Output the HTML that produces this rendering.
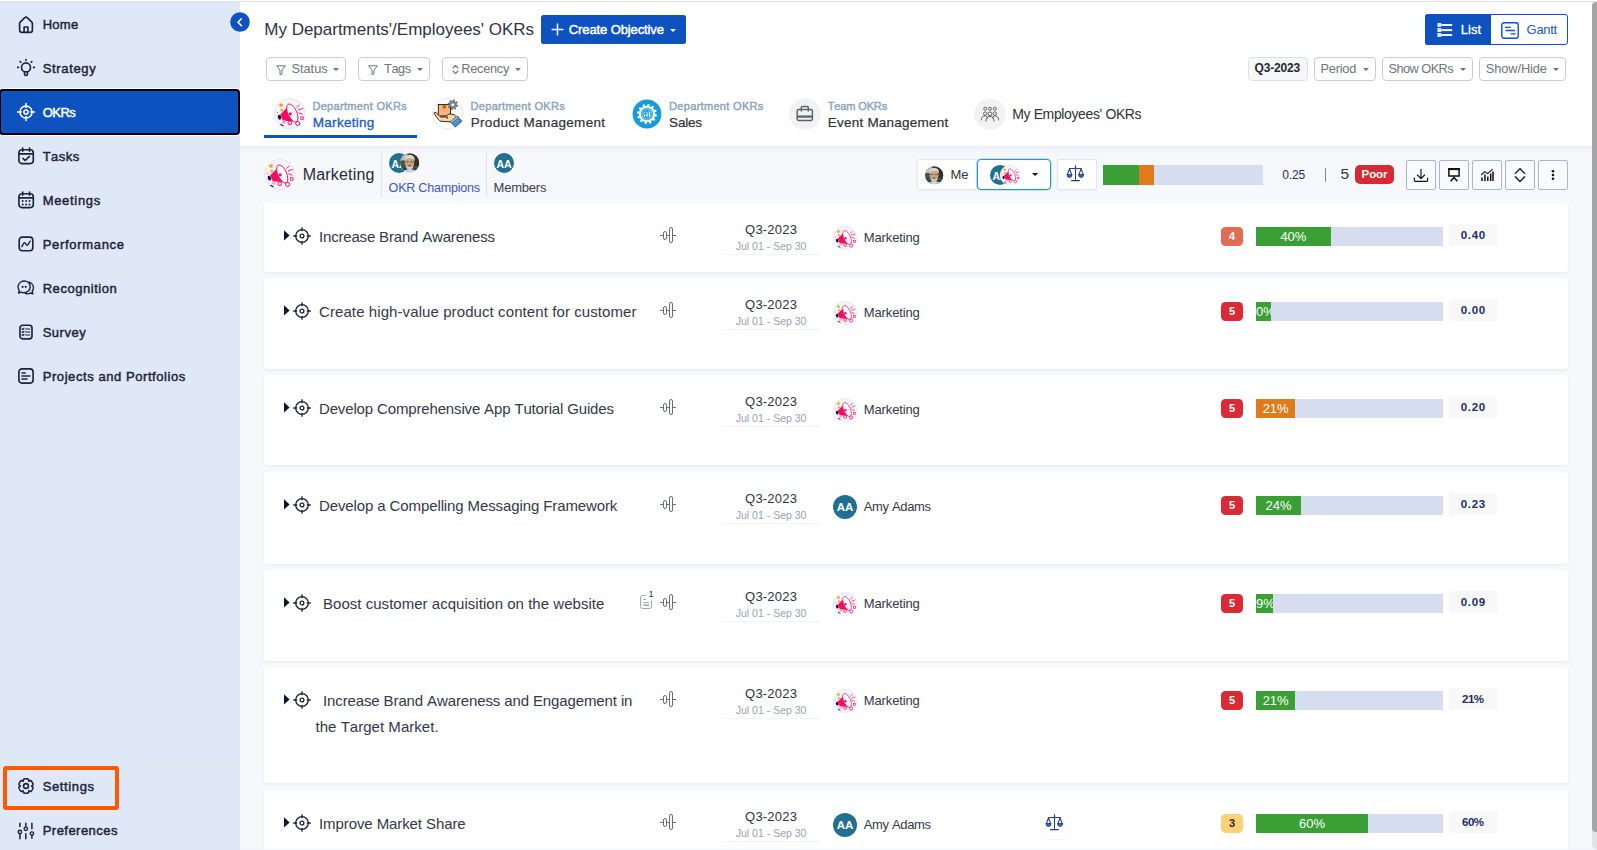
<!DOCTYPE html>
<html lang="en"><head><meta charset="utf-8"><title>My Departments'/Employees' OKRs</title>
<style>
html,body{margin:0;padding:0}
body{width:1597px;height:850px;overflow:hidden;position:relative;background:#f7f8fc;font-family:"Liberation Sans",Arial,sans-serif;font-kerning:none;-webkit-font-smoothing:antialiased}
.t{position:absolute;white-space:nowrap;margin:0}
.b{position:absolute;box-sizing:content-box}
.i{position:absolute;overflow:visible}
</style></head>
<body>
<!-- sidebar -->
<div class="b" style="left:0px;top:0px;width:240px;height:850px;background:#dfe8f7;"></div>
<div class="b" style="left:-1px;top:89px;width:241px;height:46px;background:#0d52bf;border:2px solid #000;border-radius:4px;box-sizing:border-box;box-shadow:0 0 0 1px rgba(255,255,255,.75);"></div>
<div class="b" style="left:0px;top:763px;width:240px;height:1px;background:#e6e6e2;"></div>
<svg class="i" style="left:16px;top:14.5px;" width="20" height="20" viewBox="0 0 20 20"><path fill="none" stroke="#1d2438" stroke-width="1.65" stroke-linecap="round" stroke-linejoin="round" d="M3.6 8.6 Q3.6 7.6 4.4 6.9 L8.8 2.7 Q10 1.5 11.2 2.7 L15.6 6.9 Q16.4 7.6 16.4 8.6 V15 Q16.4 17.4 14 17.4 H6 Q3.6 17.4 3.6 15 Z"/><path fill="none" stroke="#1d2438" stroke-width="1.65" stroke-linecap="round" stroke-linejoin="round" d="M8.1 17.2 V12 H11.9 V17.2"/></svg>
<div class="t" style="left:42.7px;top:15px;font-size:13px;line-height:20px;color:#1d2438;letter-spacing:0.27px;-webkit-text-stroke:0.45px #1d2438;">Home</div>
<svg class="i" style="left:16px;top:58px;" width="20" height="20" viewBox="0 0 20 20"><circle fill="none" stroke="#1d2438" stroke-width="1.65" stroke-linecap="round" stroke-linejoin="round" cx="10" cy="9.4" r="4.5"/><path fill="none" stroke="#1d2438" stroke-width="1.65" stroke-linecap="round" stroke-linejoin="round" d="M8.5 14.8 V16.2 Q8.5 17.4 10 17.4 Q11.5 17.4 11.5 16.2 V14.8"/><path fill="none" stroke="#1d2438" stroke-width="1.65" stroke-linecap="round" stroke-linejoin="round" d="M10 1.6 V2.4 M4.2 3.6 L4.8 4.2 M15.8 3.6 L15.2 4.2 M1.6 9.4 H2.4 M17.6 9.4 H18.4"/></svg>
<div class="t" style="left:42.7px;top:59px;font-size:13px;line-height:20px;color:#1d2438;letter-spacing:0.65px;-webkit-text-stroke:0.45px #1d2438;">Strategy</div>
<svg class="i" style="left:16px;top:102px;" width="20" height="20" viewBox="0 0 20 20"><circle fill="none" stroke="#fff" stroke-width="1.5" stroke-linecap="round" stroke-linejoin="round" cx="10" cy="10" r="6.1"/><circle fill="none" stroke="#fff" stroke-width="1.5" stroke-linecap="round" stroke-linejoin="round" cx="10" cy="10" r="2.1"/><path fill="none" stroke="#fff" stroke-width="1.5" stroke-linecap="round" stroke-linejoin="round" d="M14.60 10.00 L18.50 10.00 M5.40 10.00 L1.50 10.00 M10.00 14.60 L10.00 18.50 M10.00 5.40 L10.00 1.50 "/></svg>
<div class="t" style="left:42.7px;top:103px;font-size:13px;line-height:20px;color:#fff;letter-spacing:-0.52px;-webkit-text-stroke:0.45px #fff;">OKRs</div>
<svg class="i" style="left:16px;top:146px;" width="20" height="20" viewBox="0 0 20 20"><rect fill="none" stroke="#1d2438" stroke-width="1.65" stroke-linecap="round" stroke-linejoin="round" x="2.9" y="3.7" width="14.4" height="13.9" rx="3"/><path fill="none" stroke="#1d2438" stroke-width="1.65" stroke-linecap="round" stroke-linejoin="round" d="M6.7 2.1 V5.2 M13.5 2.1 V5.2 M3.2 7.8 H17"/><path fill="none" stroke="#1d2438" stroke-width="1.65" stroke-linecap="round" stroke-linejoin="round" d="M7 12.4 L9.2 14.5 L13.4 10.4"/></svg>
<div class="t" style="left:42.7px;top:147px;font-size:13px;line-height:20px;color:#1d2438;letter-spacing:0.46px;-webkit-text-stroke:0.45px #1d2438;">Tasks</div>
<svg class="i" style="left:16px;top:190px;" width="20" height="20" viewBox="0 0 20 20"><rect fill="none" stroke="#1d2438" stroke-width="1.65" stroke-linecap="round" stroke-linejoin="round" x="2.9" y="3.7" width="14.4" height="13.9" rx="3"/><path fill="none" stroke="#1d2438" stroke-width="1.65" stroke-linecap="round" stroke-linejoin="round" d="M6.7 2.1 V5.2 M13.5 2.1 V5.2 M3.2 7.8 H17"/><circle cx="6.7" cy="11.1" r="1" fill="#1d2438"/><circle cx="10.1" cy="11.1" r="1" fill="#1d2438"/><circle cx="13.5" cy="11.1" r="1" fill="#1d2438"/><circle cx="6.7" cy="14.4" r="1" fill="#1d2438"/><circle cx="10.1" cy="14.4" r="1" fill="#1d2438"/><circle cx="13.5" cy="14.4" r="1" fill="#1d2438"/></svg>
<div class="t" style="left:42.7px;top:191px;font-size:13px;line-height:20px;color:#1d2438;letter-spacing:0.68px;-webkit-text-stroke:0.45px #1d2438;">Meetings</div>
<svg class="i" style="left:16px;top:234px;" width="20" height="20" viewBox="0 0 20 20"><rect fill="none" stroke="#1d2438" stroke-width="1.65" stroke-linecap="round" stroke-linejoin="round" x="3.2" y="3.1" width="13.6" height="13.6" rx="3"/><path fill="none" stroke="#1d2438" stroke-width="1.4" stroke-linecap="round" stroke-linejoin="round" d="M5.8 12.6 L7.8 9.2 Q8.5 8.1 9.3 9.2 L10.4 10.8 Q11.2 11.9 12 10.7 L14.2 7"/></svg>
<div class="t" style="left:42.7px;top:235px;font-size:13px;line-height:20px;color:#1d2438;letter-spacing:0.69px;-webkit-text-stroke:0.45px #1d2438;">Performance</div>
<svg class="i" style="left:16px;top:278px;" width="20" height="20" viewBox="0 0 20 20"><g transform="translate(0,-0.6)"><path fill="none" stroke="#1d2438" stroke-width="1.45" stroke-linecap="round" stroke-linejoin="round" d="M2.6 15.6 L3.2 13.1 C1.2 10.4 1.8 6.6 4.8 4.6 C7.8 2.7 11.8 3.6 13.5 6.5 C15.2 9.6 13.9 13.4 10.6 14.8 C8.6 15.6 6.6 15.4 5.2 14.7 Z"/><path fill="none" stroke="#1d2438" stroke-width="1.45" stroke-linecap="round" stroke-linejoin="round" d="M13.2 4.9 C16 5.6 17.8 8.2 17.4 11 C17.2 12.2 16.8 13 16.2 13.8 L16.9 16.4 L14.4 15.6 C13 16.5 11.2 16.7 9.6 16.1"/><circle cx="6.6" cy="9.4" r="1.1" fill="#1d2438"/><circle cx="9.7" cy="9.4" r="1.1" fill="#1d2438"/></g></svg>
<div class="t" style="left:42.7px;top:279px;font-size:13px;line-height:20px;color:#1d2438;letter-spacing:0.54px;-webkit-text-stroke:0.45px #1d2438;">Recognition</div>
<svg class="i" style="left:16px;top:322px;" width="20" height="20" viewBox="0 0 20 20"><rect fill="none" stroke="#1d2438" stroke-width="1.65" stroke-linecap="round" stroke-linejoin="round" x="4" y="3.2" width="12" height="13.6" rx="2.6"/><path fill="none" stroke="#1d2438" stroke-width="1.2" stroke-linecap="round" stroke-linejoin="round" d="M6.1 7.0 l0.7 0.7 l1.1 -1.4 M9.6 7.0 H13.8 M6.1 10.0 l0.7 0.7 l1.1 -1.4 M9.6 10.0 H13.8 M6.1 13.0 l0.7 0.7 l1.1 -1.4 M9.6 13.0 H13.8 "/></svg>
<div class="t" style="left:42.7px;top:323px;font-size:13px;line-height:20px;color:#1d2438;letter-spacing:0.51px;-webkit-text-stroke:0.45px #1d2438;">Survey</div>
<svg class="i" style="left:16px;top:366px;" width="20" height="20" viewBox="0 0 20 20"><rect fill="none" stroke="#1d2438" stroke-width="1.65" stroke-linecap="round" stroke-linejoin="round" x="2.9" y="2.9" width="14.2" height="14.2" rx="3"/><path fill="none" stroke="#1d2438" stroke-width="1.65" stroke-linecap="round" stroke-linejoin="round" d="M6 7 H9.2 M6 10 H13.8 M6 13 H11"/></svg>
<div class="t" style="left:42.7px;top:367px;font-size:13px;line-height:20px;color:#1d2438;letter-spacing:0.57px;-webkit-text-stroke:0.45px #1d2438;">Projects and Portfolios</div>
<svg class="i" style="left:16px;top:776px;" width="20" height="20" viewBox="0 0 20 20"><path fill="none" stroke="#1d2438" stroke-width="1.6" stroke-linecap="round" stroke-linejoin="round" d="M15.50 10.00 L16.13 10.32 L16.53 10.69 L16.83 11.08 L17.07 11.50 L17.00 11.88 L16.90 12.24 L16.77 12.60 L16.62 12.95 L16.46 13.29 L16.28 13.62 L16.08 13.95 L15.87 14.26 L15.63 14.56 L15.39 14.85 L15.13 15.13 L14.83 15.37 L14.35 15.38 L13.86 15.31 L13.34 15.15 L12.75 14.76 L12.79 15.47 L12.67 16.00 L12.48 16.46 L12.23 16.87 L11.88 17.00 L11.51 17.09 L11.13 17.16 L10.76 17.21 L10.38 17.24 L10.00 17.25 L9.62 17.24 L9.24 17.21 L8.87 17.16 L8.49 17.09 L8.12 17.00 L7.77 16.87 L7.52 16.46 L7.33 16.00 L7.21 15.47 L7.25 14.76 L6.66 15.15 L6.14 15.31 L5.65 15.38 L5.17 15.37 L4.87 15.13 L4.61 14.85 L4.37 14.56 L4.13 14.26 L3.92 13.95 L3.72 13.62 L3.54 13.29 L3.38 12.95 L3.23 12.60 L3.10 12.24 L3.00 11.88 L2.93 11.50 L3.17 11.08 L3.47 10.69 L3.87 10.32 L4.50 10.00 L3.87 9.68 L3.47 9.31 L3.17 8.92 L2.93 8.50 L3.00 8.12 L3.10 7.76 L3.23 7.40 L3.38 7.05 L3.54 6.71 L3.72 6.38 L3.92 6.05 L4.13 5.74 L4.37 5.44 L4.61 5.15 L4.87 4.87 L5.17 4.63 L5.65 4.62 L6.14 4.69 L6.66 4.85 L7.25 5.24 L7.21 4.53 L7.33 4.00 L7.52 3.54 L7.77 3.13 L8.12 3.00 L8.49 2.91 L8.87 2.84 L9.24 2.79 L9.62 2.76 L10.00 2.75 L10.38 2.76 L10.76 2.79 L11.13 2.84 L11.51 2.91 L11.88 3.00 L12.23 3.13 L12.48 3.54 L12.67 4.00 L12.79 4.53 L12.75 5.24 L13.34 4.85 L13.86 4.69 L14.35 4.62 L14.83 4.63 L15.13 4.87 L15.39 5.15 L15.63 5.44 L15.87 5.74 L16.08 6.05 L16.28 6.38 L16.46 6.71 L16.62 7.05 L16.77 7.40 L16.90 7.76 L17.00 8.12 L17.07 8.50 L16.83 8.92 L16.53 9.31 L16.13 9.68 Z"/><circle fill="none" stroke="#1d2438" stroke-width="1.6" stroke-linecap="round" stroke-linejoin="round" cx="10" cy="10" r="2.4"/></svg>
<div class="t" style="left:42.7px;top:777px;font-size:13px;line-height:20px;color:#1d2438;letter-spacing:0.62px;-webkit-text-stroke:0.45px #1d2438;">Settings</div>
<svg class="i" style="left:16px;top:820.5px;" width="20" height="20" viewBox="0 0 20 20"><path fill="none" stroke="#1d2438" stroke-width="1.5" stroke-linecap="round" stroke-linejoin="round" d="M3.9 2.2 V5.6 M3.9 13.0 V17.8 M9.8 2.2 V5.6 M9.8 12.8 V17.8 M15.9 2.2 V7.8 M15.9 14.6 V17.2 "/><circle fill="none" stroke="#1d2438" stroke-width="1.4" stroke-linecap="round" stroke-linejoin="round" cx="3.9" cy="11" r="1.7"/><circle fill="none" stroke="#1d2438" stroke-width="1.4" stroke-linecap="round" stroke-linejoin="round" cx="9.8" cy="7.8" r="1.7"/><circle fill="none" stroke="#1d2438" stroke-width="1.4" stroke-linecap="round" stroke-linejoin="round" cx="15.9" cy="12.6" r="1.7"/></svg>
<div class="t" style="left:42.7px;top:821px;font-size:13px;line-height:20px;color:#1d2438;letter-spacing:0.47px;-webkit-text-stroke:0.45px #1d2438;">Preferences</div>
<div class="b" style="left:3px;top:766px;width:116px;height:44px;border:4px solid #ff5a00;border-radius:3px;box-sizing:border-box;"></div>
<svg class="i" style="left:230.2px;top:11.9px;z-index:5;" width="20" height="20" viewBox="0 0 20 20"><circle cx="10" cy="10" r="9.8" fill="#0d52bf"/><path d="M11.4 6.8 L8 10.2 L11.4 13.6" fill="none" stroke="#fff" stroke-width="1.6" stroke-linecap="round" stroke-linejoin="round"/></svg>
<!-- header -->
<div class="b" style="left:240px;top:0px;width:1357px;height:146px;background:#fff;"></div>
<div class="b" style="left:240px;top:146px;width:1357px;height:10px;background:linear-gradient(#edeff5,#f4f5fa 45%,#f7f8fc);"></div>
<div class="t" style="left:264.3px;top:18px;font-size:17px;line-height:24px;color:#2e3446;letter-spacing:-0.01px;">My Departments'/Employees' OKRs</div>
<div class="b" style="left:541px;top:15px;width:145px;height:29px;background:#0d52bf;border-radius:2.5px;"></div>
<svg class="i" style="left:550.5px;top:23.3px;" width="13" height="13" viewBox="0 0 13 13"><path d="M6.5 0.6 V12.4 M0.6 6.5 H12.4" stroke="#fff" stroke-width="1.5" fill="none"/></svg>
<div class="t" style="left:568.8px;top:21px;font-size:13px;line-height:18px;color:#fff;letter-spacing:-0.11px;-webkit-text-stroke:0.45px #fff;">Create Objective</div>
<svg class="i" style="left:670px;top:28.5px;" width="6" height="3" viewBox="0 0 6 3"><path d="M0 0 H6 L3.0 3 Z" fill="#fff"/></svg>
<div class="b" style="left:266px;top:57px;width:80px;height:24px;background:#fff;border:1px solid #c8cbd0;border-radius:4px;box-sizing:border-box;"></div>
<div class="b" style="left:358px;top:57px;width:72px;height:24px;background:#fff;border:1px solid #c8cbd0;border-radius:4px;box-sizing:border-box;"></div>
<div class="b" style="left:442px;top:57px;width:86px;height:24px;background:#fff;border:1px solid #c8cbd0;border-radius:4px;box-sizing:border-box;"></div>
<svg class="i" style="left:274.7px;top:63.8px;" width="12" height="12" viewBox="0 0 12 12"><path d="M1.7 1.8 H10.3 L7 6.2 V9.9 L5 10.7 V6.2 Z" fill="none" stroke="#6c757d" stroke-width="1" stroke-linejoin="round"/></svg>
<div class="t" style="left:291.4px;top:60px;font-size:12.8px;line-height:18px;color:#6c757d;">Status</div>
<svg class="i" style="left:333.2px;top:68px;" width="6" height="3" viewBox="0 0 6 3"><path d="M0 0 H6 L3.0 3 Z" fill="#6c757d"/></svg>
<svg class="i" style="left:367.2px;top:63.8px;" width="12" height="12" viewBox="0 0 12 12"><path d="M1.7 1.8 H10.3 L7 6.2 V9.9 L5 10.7 V6.2 Z" fill="none" stroke="#6c757d" stroke-width="1" stroke-linejoin="round"/></svg>
<div class="t" style="left:384px;top:60px;font-size:12.8px;line-height:18px;color:#6c757d;letter-spacing:-0.42px;">Tags</div>
<svg class="i" style="left:417.2px;top:68px;" width="6" height="3" viewBox="0 0 6 3"><path d="M0 0 H6 L3.0 3 Z" fill="#6c757d"/></svg>
<svg class="i" style="left:451.6px;top:63.6px;" width="7" height="11" viewBox="0 0 7 11"><path d="M1 4 L3.5 1.4 L6 4 M1 7 L3.5 9.6 L6 7" fill="none" stroke="#6c757d" stroke-width="1.1" stroke-linejoin="round" stroke-linecap="round"/></svg>
<div class="t" style="left:461.3px;top:60px;font-size:12.8px;line-height:18px;color:#6c757d;letter-spacing:-0.3px;">Recency</div>
<svg class="i" style="left:515.2px;top:68px;" width="6" height="3" viewBox="0 0 6 3"><path d="M0 0 H6 L3.0 3 Z" fill="#6c757d"/></svg>
<div class="b" style="left:1425px;top:14px;width:143px;height:31px;background:#fff;border:1px solid #0d52bf;border-radius:3px;box-sizing:border-box;"></div>
<div class="b" style="left:1425px;top:14px;width:65.5px;height:31px;background:#0d52bf;border-radius:3px;border-top-right-radius:0;border-bottom-right-radius:0;"></div>
<svg class="i" style="left:1436.6px;top:22px;" width="16" height="16" viewBox="0 0 16 16"><rect x="0.4" y="1" width="3.9" height="3.9" fill="#fff" opacity=".88"/><path d="M4.3 3 H15.2" stroke="#fff" stroke-width="2" opacity=".95"/><rect x="0.4" y="6.1" width="3.9" height="3.9" fill="#fff" opacity=".88"/><path d="M4.3 8.1 H15.2" stroke="#fff" stroke-width="2" opacity=".95"/><rect x="0.4" y="11" width="3.9" height="3.9" fill="#fff" opacity=".88"/><path d="M4.3 13 H15.2" stroke="#fff" stroke-width="2" opacity=".95"/></svg>
<div class="t" style="left:1460.8px;top:20px;font-size:13px;line-height:20px;color:#fff;letter-spacing:-0.01px;-webkit-text-stroke:0.3px #fff;">List</div>
<svg class="i" style="left:1501px;top:21.5px;" width="18" height="17" viewBox="0 0 18 17"><rect x="0.8" y="0.8" width="16.4" height="15.4" rx="2.2" fill="none" stroke="#0d52bf" stroke-width="1.4"/><path d="M4 5.3 H9.6 M4.6 8.5 H14 M9.6 11.9 H14.6" stroke="#0d52bf" stroke-width="1.3" fill="none"/></svg>
<div class="t" style="left:1526.6px;top:20px;font-size:13px;line-height:20px;color:#1a5ac8;letter-spacing:-0.3px;">Gantt</div>
<div class="b" style="left:1247.5px;top:57px;width:60px;height:23.5px;background:#f6f7f9;border:1px solid #dcdfe4;border-radius:4px;box-sizing:border-box;"></div>
<div class="t" style="left:1254.6px;top:59px;font-size:12px;line-height:18px;color:#23272f;font-weight:700;letter-spacing:-0.18px;">Q3-2023</div>
<div class="b" style="left:1314px;top:57px;width:62px;height:23.5px;background:#fff;border:1px solid #c8cbd0;border-radius:4px;box-sizing:border-box;"></div>
<div class="b" style="left:1382px;top:57px;width:91px;height:23.5px;background:#fff;border:1px solid #c8cbd0;border-radius:4px;box-sizing:border-box;"></div>
<div class="b" style="left:1479px;top:57px;width:87px;height:23.5px;background:#fff;border:1px solid #c8cbd0;border-radius:4px;box-sizing:border-box;"></div>
<div class="t" style="left:1320.5px;top:60px;font-size:12.8px;line-height:18px;color:#6c757d;letter-spacing:-0.24px;">Period</div>
<svg class="i" style="left:1363px;top:68px;" width="6" height="3" viewBox="0 0 6 3"><path d="M0 0 H6 L3.0 3 Z" fill="#6c757d"/></svg>
<div class="t" style="left:1388.6px;top:60px;font-size:12.8px;line-height:18px;color:#6c757d;letter-spacing:-0.58px;">Show OKRs</div>
<svg class="i" style="left:1460px;top:68px;" width="6" height="3" viewBox="0 0 6 3"><path d="M0 0 H6 L3.0 3 Z" fill="#6c757d"/></svg>
<div class="t" style="left:1485.8px;top:60px;font-size:12.8px;line-height:18px;color:#6c757d;letter-spacing:-0.09px;">Show/Hide</div>
<svg class="i" style="left:1553px;top:68px;" width="6" height="3" viewBox="0 0 6 3"><path d="M0 0 H6 L3.0 3 Z" fill="#6c757d"/></svg>
<!-- tabs -->
<svg class="i" style="left:274.3px;top:98.3px;" width="31.4" height="31.4" viewBox="0 0 32 32"><circle cx="16" cy="16" r="15.6" fill="#f5f5f7" stroke="#dfe2e9" stroke-width="0.8"/><path d="M7.2 4.6 l0.8 1.6 1.8 0.2 -1.3 1.2 0.4 1.8 -1.7 -0.9 -1.6 0.9 0.3 -1.8 -1.3 -1.2 1.8 -0.2z" fill="#f59a23"/><path d="M7.9 10.4 l0.6 1.1 1.3 0.2 -0.9 0.9 0.2 1.3 -1.2 -0.6 -1.2 0.6 0.2 -1.3 -0.9 -0.9 1.3 -0.2z" fill="#f59a23"/><circle cx="3.4" cy="14.8" r="0.8" fill="#f59a23"/><ellipse cx="5.6" cy="19.6" rx="1.7" ry="2.5" fill="#0b0b5e" transform="rotate(-20 5.6 19.6)"/><path d="M6.2 17 L13.6 9.4 L20.6 23.6 L9.2 23.2 Z" fill="#ff0a60"/><ellipse cx="18.7" cy="15.3" rx="4.5" ry="9.9" transform="rotate(-24 18.7 15.3)" fill="#fff" stroke="#ff0a60" stroke-width="0.9"/><circle cx="16.6" cy="16.2" r="1.6" fill="#ff0a60"/><rect x="8.3" y="22.6" width="3.4" height="3.6" rx="0.8" fill="#f7a6b5"/><path d="M7 27 L9.4 28.4" stroke="#0b0b5e" stroke-width="1.1" stroke-linecap="round"/><path d="M23.3 9.6 L25.8 7.2 M24.9 12.2 L29.3 10.7 M25.3 15.2 L28.8 16.5" stroke="#ff0a60" stroke-width="0.9" stroke-linecap="round" fill="none"/><rect x="27.3" y="19.2" width="2.5" height="2.5" fill="none" stroke="#ff0a60" stroke-width="0.8"/><circle cx="16.2" cy="25.4" r="1.9" fill="none" stroke="#ff0a60" stroke-width="1"/><circle cx="24.2" cy="26" r="2.1" fill="none" stroke="#ff0a60" stroke-width="1"/></svg>
<div class="t" style="left:312.4px;top:98px;font-size:11px;line-height:16px;color:#8aa1be;letter-spacing:0.32px;-webkit-text-stroke:0.4px #8aa1be;">Department OKRs</div>
<div class="t" style="left:312.8px;top:113px;font-size:13.5px;line-height:20px;color:#1a59c6;letter-spacing:0.28px;-webkit-text-stroke:0.3px #1a59c6;">Marketing</div>
<div class="b" style="left:264px;top:135px;width:153px;height:3px;background:#0d52bf;"></div>
<svg class="i" style="left:432.1px;top:98.3px;" width="31.4" height="31.4" viewBox="0 0 32 32"><circle cx="16" cy="16" r="15.6" fill="#fff" stroke="#dfe3ea" stroke-width="0.8"/><rect x="6.4" y="6.6" width="12.4" height="12" fill="#f8b37c" stroke="#1a1208" stroke-width="0.9"/><rect x="10.9" y="7" width="3.4" height="3.6" fill="#b5651d"/><path d="M24.80 6.90 L26.18 7.37 L25.85 8.74 L24.41 8.53 L23.75 9.45 L24.39 10.75 L23.19 11.49 L22.31 10.32 L21.20 10.50 L20.73 11.88 L19.36 11.55 L19.57 10.11 L18.65 9.45 L17.35 10.09 L16.61 8.89 L17.78 8.01 L17.60 6.90 L16.22 6.43 L16.55 5.06 L17.99 5.27 L18.65 4.35 L18.01 3.05 L19.21 2.31 L20.09 3.48 L21.20 3.30 L21.67 1.92 L23.04 2.25 L22.83 3.69 L23.75 4.35 L25.05 3.71 L25.79 4.91 L24.62 5.79 Z" fill="#7d8a9b" stroke="#2b2f36" stroke-width="0.5"/><circle cx="21.2" cy="6.9" r="1.4" fill="#fff"/><path d="M1.8 15.2 Q2.6 13.8 4.2 15 L8 18.6 L15 18.2 Q16.4 16.2 19 16.4 L22.4 16.8 L26.2 20.4 L21.4 24.4 L9.6 23.8 Q7.6 23.4 6 21.4 Z" fill="#ffd5a6" stroke="#1a1208" stroke-width="0.9" stroke-linejoin="round"/><path d="M8.6 19.4 H15.6 Q16.4 20.3 15.6 21.2" fill="none" stroke="#1a1208" stroke-width="0.9"/><g transform="rotate(-42 24.6 24)"><rect x="20.2" y="20.4" width="9" height="7.2" fill="#4a90dc" stroke="#1c2f4a" stroke-width="0.7"/><rect x="20.2" y="20.4" width="9" height="1.8" fill="#b5d3ea" stroke="#1c2f4a" stroke-width="0.4"/><circle cx="26.4" cy="24.2" r="0.6" fill="#d9a520"/></g></svg>
<div class="t" style="left:470.6px;top:98px;font-size:11px;line-height:16px;color:#8aa1be;letter-spacing:0.3px;-webkit-text-stroke:0.4px #8aa1be;">Department OKRs</div>
<div class="t" style="left:470.7px;top:113px;font-size:13.5px;line-height:20px;color:#2f3238;letter-spacing:0.31px;-webkit-text-stroke:0.2px #2f3238;">Product Management</div>
<svg class="i" style="left:632.2px;top:99px;" width="30" height="30" viewBox="0 0 32 32"><circle cx="16" cy="16" r="15.4" fill="#189bd9"/><path d="M24.70 16.00 L26.68 16.67 L26.36 18.66 L24.27 18.69 L23.53 20.35 L24.91 21.92 L23.64 23.49 L21.82 22.47 L20.35 23.53 L20.76 25.58 L18.88 26.31 L17.81 24.51 L16.00 24.70 L15.33 26.68 L13.34 26.36 L13.31 24.27 L11.65 23.53 L10.08 24.91 L8.51 23.64 L9.53 21.82 L8.47 20.35 L6.42 20.76 L5.69 18.88 L7.49 17.81 L7.30 16.00 L5.32 15.33 L5.64 13.34 L7.73 13.31 L8.47 11.65 L7.09 10.08 L8.36 8.51 L10.18 9.53 L11.65 8.47 L11.24 6.42 L13.12 5.69 L14.19 7.49 L16.00 7.30 L16.67 5.32 L18.66 5.64 L18.69 7.73 L20.35 8.47 L21.92 7.09 L23.49 8.36 L22.47 10.18 L23.53 11.65 L25.58 11.24 L26.31 13.12 L24.51 14.19 Z" fill="#fff"/><circle cx="16" cy="16" r="6.6" fill="#189bd9"/><circle cx="16" cy="16" r="5.4" fill="none" stroke="#fff" stroke-width="0.6"/><path d="M12.6 18.8 V16.6 h1.4 V18.8z M15.3 18.8 V15.4 h1.4 V18.8z M18 18.8 V14.2 h1.4 V18.8z" fill="#fff"/><path d="M11.8 15.6 L14.8 13.6 L16.4 14.6 L19.8 12" fill="none" stroke="#fff" stroke-width="0.6"/></svg>
<div class="t" style="left:669.1px;top:98px;font-size:11px;line-height:16px;color:#8aa1be;letter-spacing:0.31px;-webkit-text-stroke:0.4px #8aa1be;">Department OKRs</div>
<div class="t" style="left:669.1px;top:113px;font-size:13.5px;line-height:20px;color:#2f3238;letter-spacing:-0.2px;-webkit-text-stroke:0.2px #2f3238;">Sales</div>
<svg class="i" style="left:789px;top:98px;" width="32" height="32" viewBox="0 0 32 32"><circle cx="16" cy="16" r="15.8" fill="#f2f2f3"/><rect x="8.2" y="11.5" width="15.2" height="11" rx="1.4" fill="none" stroke="#5f6368" stroke-width="1.5"/><path d="M12.3 13.6 V9.4 Q12.3 8.4 13.3 8.4 H18.3 Q19.3 8.4 19.3 9.4 V13.6" fill="none" stroke="#5f6368" stroke-width="1.5"/><path d="M8.4 18.6 H23.2" fill="none" stroke="#5f6368" stroke-width="2.3"/></svg>
<div class="t" style="left:827.7px;top:98px;font-size:11px;line-height:16px;color:#8aa1be;letter-spacing:-0.13px;-webkit-text-stroke:0.4px #8aa1be;">Team OKRs</div>
<div class="t" style="left:827.8px;top:113px;font-size:13.5px;line-height:20px;color:#2f3238;letter-spacing:0.22px;-webkit-text-stroke:0.2px #2f3238;">Event Management</div>
<svg class="i" style="left:974px;top:98px;" width="32" height="32" viewBox="0 0 32 32"><circle cx="16" cy="16" r="15.8" fill="#f2f2f3"/><g fill="none" stroke="#4d5156" stroke-width="0.9"><circle cx="11.2" cy="10.7" r="1.5"/><circle cx="16" cy="10.7" r="1.5"/><circle cx="20.8" cy="10.7" r="1.5"/><circle cx="11.2" cy="15.6" r="1.7"/><path d="M7.2 22.4 Q7.6 17.8 11.2 17.8 Q13.2 17.8 13.8 20.6"/><circle cx="20.8" cy="15.6" r="1.7"/><path d="M24.8 22.4 Q24.4 17.8 20.8 17.8 Q18.8 17.8 18.2 20.6"/><circle cx="16" cy="15.8" r="1.9"/><path d="M11.9 23.4 Q12.2 18.4 16 18.4 Q19.8 18.4 20.1 23.4"/></g></svg>
<div class="t" style="left:1012.2px;top:104px;font-size:14px;line-height:20px;color:#2f3238;letter-spacing:-0.37px;">My Employees' OKRs</div>
<!-- department header -->
<svg class="i" style="left:264.4px;top:159.1px;" width="31.2" height="31.2" viewBox="0 0 32 32"><circle cx="16" cy="16" r="15.6" fill="#f5f5f7" stroke="#dfe2e9" stroke-width="0.8"/><path d="M7.2 4.6 l0.8 1.6 1.8 0.2 -1.3 1.2 0.4 1.8 -1.7 -0.9 -1.6 0.9 0.3 -1.8 -1.3 -1.2 1.8 -0.2z" fill="#f59a23"/><path d="M7.9 10.4 l0.6 1.1 1.3 0.2 -0.9 0.9 0.2 1.3 -1.2 -0.6 -1.2 0.6 0.2 -1.3 -0.9 -0.9 1.3 -0.2z" fill="#f59a23"/><circle cx="3.4" cy="14.8" r="0.8" fill="#f59a23"/><ellipse cx="5.6" cy="19.6" rx="1.7" ry="2.5" fill="#0b0b5e" transform="rotate(-20 5.6 19.6)"/><path d="M6.2 17 L13.6 9.4 L20.6 23.6 L9.2 23.2 Z" fill="#ff0a60"/><ellipse cx="18.7" cy="15.3" rx="4.5" ry="9.9" transform="rotate(-24 18.7 15.3)" fill="#fff" stroke="#ff0a60" stroke-width="0.9"/><circle cx="16.6" cy="16.2" r="1.6" fill="#ff0a60"/><rect x="8.3" y="22.6" width="3.4" height="3.6" rx="0.8" fill="#f7a6b5"/><path d="M7 27 L9.4 28.4" stroke="#0b0b5e" stroke-width="1.1" stroke-linecap="round"/><path d="M23.3 9.6 L25.8 7.2 M24.9 12.2 L29.3 10.7 M25.3 15.2 L28.8 16.5" stroke="#ff0a60" stroke-width="0.9" stroke-linecap="round" fill="none"/><rect x="27.3" y="19.2" width="2.5" height="2.5" fill="none" stroke="#ff0a60" stroke-width="0.8"/><circle cx="16.2" cy="25.4" r="1.9" fill="none" stroke="#ff0a60" stroke-width="1"/><circle cx="24.2" cy="26" r="2.1" fill="none" stroke="#ff0a60" stroke-width="1"/></svg>
<div class="t" style="left:302.8px;top:164px;font-size:16px;line-height:22px;color:#262b3a;letter-spacing:0.17px;">Marketing</div>
<div class="b" style="left:381px;top:152px;width:1px;height:45px;background:#dfe2ea;"></div>
<div class="b" style="left:389px;top:153px;width:20px;height:20px;border-radius:50%;background:#236f92;color:#fff;font-weight:700;font-size:10.5px;line-height:22.4px;text-align:center;">AA</div>
<svg class="i" style="left:400.2px;top:153.2px;" width="19.6" height="19.6" viewBox="0 0 32 32"><defs><clipPath id="pc1"><circle cx="16" cy="16" r="15.6"/></clipPath></defs><circle cx="16" cy="16" r="16" fill="#fff"/><g clip-path="url(#pc1)"><rect width="32" height="32" fill="#3b2d25"/><rect x="0" y="0" width="12" height="14" fill="#bcbcbc"/><rect x="0" y="12" width="10" height="10" fill="#3f5c3c"/><rect x="0" y="21" width="32" height="4.5" fill="#1f5f58"/><path d="M4 32 Q8 25.5 16 26.5 Q24 25.5 30 32 Z" fill="#c6d2e4"/><ellipse cx="15.6" cy="16" rx="7.6" ry="10" fill="#c9a184"/><path d="M7.6 14 Q6.6 3 15.8 3 Q25 3 23.8 14 Q22.4 8.4 15.8 8.6 Q9.2 8.4 7.6 14Z" fill="#d9d7d3"/><path d="M9.4 20 Q10.6 28 15.6 28.2 Q20.6 28 21.8 20 Q20 23.4 15.6 22.8 Q11.2 23.4 9.4 20Z" fill="#cfcac4"/><path d="M9.2 14.6 H14 M16.8 14.6 H21.8" stroke="#5a4438" stroke-width="1.3"/><path d="M12.4 20.6 Q15.6 18.6 18.8 20.6 Q15.6 22.4 12.4 20.6Z" fill="#6e4434"/></g></svg>
<div class="t" style="left:388.6px;top:179px;font-size:12.6px;line-height:18px;color:#4254c4;letter-spacing:-0.26px;">OKR Champions</div>
<div class="b" style="left:486px;top:152px;width:1px;height:45px;background:#dfe2ea;"></div>
<div class="b" style="left:494px;top:153px;width:20px;height:20px;border-radius:50%;background:#236f92;color:#fff;font-weight:700;font-size:10.5px;line-height:22.4px;text-align:center;">AA</div>
<div class="t" style="left:493.6px;top:179px;font-size:13px;line-height:18px;color:#3a3f50;letter-spacing:-0.23px;">Members</div>
<div class="b" style="left:917px;top:159px;width:60px;height:30.5px;background:#fff;border:1px solid #e6e8ee;border-radius:2px;box-sizing:border-box;box-shadow:0 1px 2px rgba(0,0,0,.05);"></div>
<svg class="i" style="left:924.7px;top:165.5px;" width="18.6" height="18.6" viewBox="0 0 32 32"><defs><clipPath id="pc2"><circle cx="16" cy="16" r="15.6"/></clipPath></defs><g clip-path="url(#pc2)"><rect width="32" height="32" fill="#3b2d25"/><rect x="0" y="0" width="12" height="14" fill="#bcbcbc"/><rect x="0" y="12" width="10" height="10" fill="#3f5c3c"/><rect x="0" y="21" width="32" height="4.5" fill="#1f5f58"/><path d="M4 32 Q8 25.5 16 26.5 Q24 25.5 30 32 Z" fill="#c6d2e4"/><ellipse cx="15.6" cy="16" rx="7.6" ry="10" fill="#c9a184"/><path d="M7.6 14 Q6.6 3 15.8 3 Q25 3 23.8 14 Q22.4 8.4 15.8 8.6 Q9.2 8.4 7.6 14Z" fill="#d9d7d3"/><path d="M9.4 20 Q10.6 28 15.6 28.2 Q20.6 28 21.8 20 Q20 23.4 15.6 22.8 Q11.2 23.4 9.4 20Z" fill="#cfcac4"/><path d="M9.2 14.6 H14 M16.8 14.6 H21.8" stroke="#5a4438" stroke-width="1.3"/><path d="M12.4 20.6 Q15.6 18.6 18.8 20.6 Q15.6 22.4 12.4 20.6Z" fill="#6e4434"/></g></svg>
<div class="t" style="left:950.5px;top:166px;font-size:13px;line-height:18px;color:#2e3342;letter-spacing:-0.06px;">Me</div>
<div class="b" style="left:976.5px;top:159px;width:74.5px;height:31px;background:#fff;border:1px solid #2490f0;border-radius:4px;box-sizing:border-box;box-shadow:0 0 0 0.4px rgba(36,144,240,.5);"></div>
<div class="b" style="left:990px;top:164.9px;width:20px;height:20px;border-radius:50%;background:#236f92;color:#fff;font-weight:700;font-size:10.5px;line-height:22.4px;text-align:center;">AA</div>
<svg class="i" style="left:1000.4px;top:164.7px;" width="20.4" height="20.4" viewBox="0 0 32 32"><circle cx="16" cy="16" r="16" fill="#fff"/><circle cx="16" cy="16" r="15.6" fill="#f5f5f7" stroke="#dfe2e9" stroke-width="0.8"/><path d="M7.2 4.6 l0.8 1.6 1.8 0.2 -1.3 1.2 0.4 1.8 -1.7 -0.9 -1.6 0.9 0.3 -1.8 -1.3 -1.2 1.8 -0.2z" fill="#f59a23"/><path d="M7.9 10.4 l0.6 1.1 1.3 0.2 -0.9 0.9 0.2 1.3 -1.2 -0.6 -1.2 0.6 0.2 -1.3 -0.9 -0.9 1.3 -0.2z" fill="#f59a23"/><circle cx="3.4" cy="14.8" r="0.8" fill="#f59a23"/><ellipse cx="5.6" cy="19.6" rx="1.7" ry="2.5" fill="#0b0b5e" transform="rotate(-20 5.6 19.6)"/><path d="M6.2 17 L13.6 9.4 L20.6 23.6 L9.2 23.2 Z" fill="#ff0a60"/><ellipse cx="18.7" cy="15.3" rx="4.5" ry="9.9" transform="rotate(-24 18.7 15.3)" fill="#fff" stroke="#ff0a60" stroke-width="0.9"/><circle cx="16.6" cy="16.2" r="1.6" fill="#ff0a60"/><rect x="8.3" y="22.6" width="3.4" height="3.6" rx="0.8" fill="#f7a6b5"/><path d="M7 27 L9.4 28.4" stroke="#0b0b5e" stroke-width="1.1" stroke-linecap="round"/><path d="M23.3 9.6 L25.8 7.2 M24.9 12.2 L29.3 10.7 M25.3 15.2 L28.8 16.5" stroke="#ff0a60" stroke-width="0.9" stroke-linecap="round" fill="none"/><rect x="27.3" y="19.2" width="2.5" height="2.5" fill="none" stroke="#ff0a60" stroke-width="0.8"/><circle cx="16.2" cy="25.4" r="1.9" fill="none" stroke="#ff0a60" stroke-width="1"/><circle cx="24.2" cy="26" r="2.1" fill="none" stroke="#ff0a60" stroke-width="1"/></svg>
<svg class="i" style="left:1032px;top:173px;" width="6.2" height="3.1" viewBox="0 0 6.2 3.1"><path d="M0 0 H6.2 L3.1 3.1 Z" fill="#111"/></svg>
<div class="b" style="left:1057px;top:159px;width:40px;height:30.5px;background:#fff;border:1px solid #e3e6ec;border-radius:2px;box-sizing:border-box;box-shadow:0 1px 2px rgba(0,0,0,.05);"></div>
<svg class="i" style="left:1066px;top:165px;" width="19" height="18" viewBox="0 0 19 18"><g fill="none" stroke="#2c4170" stroke-width="1" stroke-linecap="round" stroke-linejoin="round"><path d="M9.5 0.6 V15.4 M3.6 3.5 H15.2"/><path d="M5.6 15.7 H13.4" stroke-width="1.3"/><path d="M3.5 3.8 L1.4 9.5 M3.5 3.8 L5.6 9.5 M15.1 3.8 L13 9.5 M15.1 3.8 L17.2 9.5" stroke-width="1.05"/></g><path d="M0.9 9.5 H6.1 Q5.9 12.5 3.5 12.5 Q1.1 12.5 0.9 9.5Z M12.5 9.5 H17.7 Q17.5 12.5 15.1 12.5 Q12.7 12.5 12.5 9.5Z" fill="#1b6fd0" stroke="#2c4170" stroke-width="0.9" stroke-linejoin="round"/><circle cx="9.5" cy="3.5" r="1.25" fill="#1f5fb8"/></svg>
<div class="b" style="left:1103px;top:165px;width:160px;height:20px;background:#d6ddef;"></div>
<div class="b" style="left:1103px;top:165px;width:36px;height:20px;background:#3a9f34;"></div>
<div class="b" style="left:1139px;top:165px;width:15px;height:20px;background:#e07b1c;"></div>
<div class="t" style="left:1282.2px;top:167px;font-size:12px;line-height:16px;color:#1e2f66;letter-spacing:-0.12px;">0.25</div>
<div class="b" style="left:1325px;top:167.5px;width:1px;height:14px;background:#7c869c;"></div>
<div class="t" style="left:1340.4px;top:164px;font-size:15.5px;line-height:20px;color:#2e3342;">5</div>
<div class="b" style="left:1355px;top:165px;width:39px;height:19px;background:#d62b35;border-radius:5px;"></div>
<div class="t" style="left:1361.6px;top:166px;font-size:11.5px;line-height:16px;color:#fff;font-weight:700;letter-spacing:-0.13px;">Poor</div>
<div class="b" style="left:1406px;top:160px;width:30px;height:30px;background:#f9fafd;border:1px solid #a9b6d8;border-radius:2px;box-sizing:border-box;"></div>
<div class="b" style="left:1439px;top:160px;width:30px;height:30px;background:#f9fafd;border:1px solid #a9b6d8;border-radius:2px;box-sizing:border-box;"></div>
<div class="b" style="left:1472px;top:160px;width:30px;height:30px;background:#f9fafd;border:1px solid #a9b6d8;border-radius:2px;box-sizing:border-box;"></div>
<div class="b" style="left:1505px;top:160px;width:30px;height:30px;background:#f9fafd;border:1px solid #a9b6d8;border-radius:2px;box-sizing:border-box;"></div>
<div class="b" style="left:1538px;top:160px;width:30px;height:30px;background:#f9fafd;border:1px solid #a9b6d8;border-radius:2px;box-sizing:border-box;"></div>
<svg class="i" style="left:1411.9px;top:166px;" width="18" height="18" viewBox="0 0 18 18"><path fill="none" stroke="#111" stroke-width="1.15" stroke-linecap="round" stroke-linejoin="round" d="M9 3.4 V12.4 M5.4 9 L9 12.6 L12.6 9 M2.4 12 V14.6 Q2.4 15.4 3.2 15.4 H14.8 Q15.6 15.4 15.6 14.6 V12"/></svg>
<svg class="i" style="left:1445px;top:166px;" width="18" height="18" viewBox="0 0 18 18"><rect x="3.9" y="2.8" width="10.2" height="7.2" fill="#fff" stroke="#111" stroke-width="1.5"/><rect x="3.2" y="2" width="11.6" height="2.1" fill="#111"/><path d="M9 10.4 V11.8 M9 11.4 L5.6 15.2 M9 11.4 L12.4 15.2" stroke="#111" stroke-width="1.5" fill="none"/></svg>
<svg class="i" style="left:1478px;top:166px;" width="18" height="18" viewBox="0 0 18 18"><path d="M4 15 V11.4 M6.9 15 V8.6 M9.8 15 V10.4 M12.7 15 V7.6 M15 15 V5.4" stroke="#111" stroke-width="1.5" fill="none"/><path d="M3.2 9 L6.8 5.6 L9.6 7.6 L14.6 3.2" stroke="#111" stroke-width="1.1" fill="none"/></svg>
<svg class="i" style="left:1510.7px;top:166px;" width="18" height="18" viewBox="0 0 18 18"><path fill="none" stroke="#111" stroke-width="1.35" stroke-linecap="round" stroke-linejoin="round" d="M4.4 7.4 L9 2.6 L13.6 7.4 M4.4 10.8 L9 15.6 L13.6 10.8"/></svg>
<svg class="i" style="left:1543.9px;top:166px;" width="18" height="18" viewBox="0 0 18 18"><circle cx="9" cy="5.2" r="1.3" fill="#111"/><circle cx="9" cy="9" r="1.3" fill="#111"/><circle cx="9" cy="12.8" r="1.3" fill="#111"/></svg>
<!-- objective rows -->
<div class="b" style="left:264px;top:203px;width:1304px;height:69px;background:#fff;border-radius:3px;box-shadow:0 1px 3px rgba(20,30,60,.07);"></div>
<svg class="i" style="left:284px;top:230px;" width="6" height="11" viewBox="0 0 6 11"><path d="M0 0.3 L5.6 5.4 L0 10.5 Z" fill="#10152e"/></svg>
<svg class="i" style="left:292px;top:226px;" width="20" height="20" viewBox="0 0 20 20"><circle fill="none" stroke="#1a1f33" stroke-width="1.3" stroke-linecap="round" stroke-linejoin="round" cx="10" cy="10" r="6.3"/><circle fill="none" stroke="#1a1f33" stroke-width="1.3" stroke-linecap="round" stroke-linejoin="round" cx="10" cy="10" r="1.9"/><path fill="none" stroke="#1a1f33" stroke-width="1.3" stroke-linecap="round" stroke-linejoin="round" d="M15.30 10.00 L18.30 10.00 M4.70 10.00 L1.70 10.00 M10.00 15.30 L10.00 18.30 M10.00 4.70 L10.00 1.70 "/></svg>
<div class="t" style="left:319px;top:226px;font-size:15px;line-height:22px;color:#33384a;letter-spacing:-0.18px;">Increase Brand Awareness</div>
<svg class="i" style="left:660px;top:227px;" width="16" height="17" viewBox="0 0 16 17"><g fill="none" stroke="#6a6e74" stroke-width="1"><path d="M0 8.5 H3.4 M6.6 8.5 H9.4 M12.6 8.5 H16"/><rect x="3.5" y="4.5" width="3" height="8" rx="1.5"/><rect x="9.5" y="0.5" width="3" height="15" rx="1.5"/></g></svg>
<div class="t" style="left:745.1px;top:221px;font-size:13px;line-height:18px;color:#2e3342;letter-spacing:0.2px;">Q3-2023</div>
<div class="t" style="left:735.7px;top:239px;font-size:10.5px;line-height:14px;color:#9aa1b6;letter-spacing:0.01px;">Jul 01 - Sep 30</div>
<div class="b" style="left:721px;top:254px;width:100px;height:1px;background:#f3f4f8;"></div>
<svg class="i" style="left:833px;top:225.8px;" width="24" height="24" viewBox="0 0 32 32"><circle cx="16" cy="16" r="15.6" fill="#f5f5f7" stroke="#dfe2e9" stroke-width="0.8"/><path d="M7.2 4.6 l0.8 1.6 1.8 0.2 -1.3 1.2 0.4 1.8 -1.7 -0.9 -1.6 0.9 0.3 -1.8 -1.3 -1.2 1.8 -0.2z" fill="#f59a23"/><path d="M7.9 10.4 l0.6 1.1 1.3 0.2 -0.9 0.9 0.2 1.3 -1.2 -0.6 -1.2 0.6 0.2 -1.3 -0.9 -0.9 1.3 -0.2z" fill="#f59a23"/><circle cx="3.4" cy="14.8" r="0.8" fill="#f59a23"/><ellipse cx="5.6" cy="19.6" rx="1.7" ry="2.5" fill="#0b0b5e" transform="rotate(-20 5.6 19.6)"/><path d="M6.2 17 L13.6 9.4 L20.6 23.6 L9.2 23.2 Z" fill="#ff0a60"/><ellipse cx="18.7" cy="15.3" rx="4.5" ry="9.9" transform="rotate(-24 18.7 15.3)" fill="#fff" stroke="#ff0a60" stroke-width="0.9"/><circle cx="16.6" cy="16.2" r="1.6" fill="#ff0a60"/><rect x="8.3" y="22.6" width="3.4" height="3.6" rx="0.8" fill="#f7a6b5"/><path d="M7 27 L9.4 28.4" stroke="#0b0b5e" stroke-width="1.1" stroke-linecap="round"/><path d="M23.3 9.6 L25.8 7.2 M24.9 12.2 L29.3 10.7 M25.3 15.2 L28.8 16.5" stroke="#ff0a60" stroke-width="0.9" stroke-linecap="round" fill="none"/><rect x="27.3" y="19.2" width="2.5" height="2.5" fill="none" stroke="#ff0a60" stroke-width="0.8"/><circle cx="16.2" cy="25.4" r="1.9" fill="none" stroke="#ff0a60" stroke-width="1"/><circle cx="24.2" cy="26" r="2.1" fill="none" stroke="#ff0a60" stroke-width="1"/></svg>
<div class="t" style="left:863.8px;top:229px;font-size:13px;line-height:18px;color:#33384a;letter-spacing:-0.13px;">Marketing</div>
<div class="b" style="left:1221px;top:227px;width:22px;height:19px;background:#e06c54;border-radius:4.5px;"></div>
<div class="t" style="left:1228.94px;top:229px;font-size:11px;line-height:14px;color:#fff;font-weight:700;">4</div>
<div class="b" style="left:1256px;top:227px;width:187px;height:19px;background:#d6ddef;"></div>
<div class="b" style="left:1256px;top:227px;width:74.8px;height:19px;background:#3a9f34;overflow:hidden;"><span style="color:#fff;font-size:13px;line-height:19px;display:block;text-align:center;white-space:nowrap;">40%</span></div>
<div class="b" style="left:1449px;top:224px;width:48px;height:22px;background:#f8f8f9;"></div>
<div class="t" style="left:1460.8px;top:228px;font-size:11.5px;line-height:14px;color:#1c2d66;font-weight:700;letter-spacing:0.67px;">0.40</div>
<div class="b" style="left:264px;top:278px;width:1304px;height:90.5px;background:#fff;border-radius:3px;box-shadow:0 1px 3px rgba(20,30,60,.07);"></div>
<svg class="i" style="left:284px;top:305px;" width="6" height="11" viewBox="0 0 6 11"><path d="M0 0.3 L5.6 5.4 L0 10.5 Z" fill="#10152e"/></svg>
<svg class="i" style="left:292px;top:301px;" width="20" height="20" viewBox="0 0 20 20"><circle fill="none" stroke="#1a1f33" stroke-width="1.3" stroke-linecap="round" stroke-linejoin="round" cx="10" cy="10" r="6.3"/><circle fill="none" stroke="#1a1f33" stroke-width="1.3" stroke-linecap="round" stroke-linejoin="round" cx="10" cy="10" r="1.9"/><path fill="none" stroke="#1a1f33" stroke-width="1.3" stroke-linecap="round" stroke-linejoin="round" d="M15.30 10.00 L18.30 10.00 M4.70 10.00 L1.70 10.00 M10.00 15.30 L10.00 18.30 M10.00 4.70 L10.00 1.70 "/></svg>
<div class="t" style="left:319px;top:301px;font-size:15px;line-height:22px;color:#33384a;letter-spacing:0.09px;">Create high-value product content for customer</div>
<svg class="i" style="left:660px;top:302px;" width="16" height="17" viewBox="0 0 16 17"><g fill="none" stroke="#6a6e74" stroke-width="1"><path d="M0 8.5 H3.4 M6.6 8.5 H9.4 M12.6 8.5 H16"/><rect x="3.5" y="4.5" width="3" height="8" rx="1.5"/><rect x="9.5" y="0.5" width="3" height="15" rx="1.5"/></g></svg>
<div class="t" style="left:745.1px;top:296px;font-size:13px;line-height:18px;color:#2e3342;letter-spacing:0.2px;">Q3-2023</div>
<div class="t" style="left:735.7px;top:314px;font-size:10.5px;line-height:14px;color:#9aa1b6;letter-spacing:0.01px;">Jul 01 - Sep 30</div>
<div class="b" style="left:721px;top:329px;width:100px;height:1px;background:#f3f4f8;"></div>
<svg class="i" style="left:833px;top:300.8px;" width="24" height="24" viewBox="0 0 32 32"><circle cx="16" cy="16" r="15.6" fill="#f5f5f7" stroke="#dfe2e9" stroke-width="0.8"/><path d="M7.2 4.6 l0.8 1.6 1.8 0.2 -1.3 1.2 0.4 1.8 -1.7 -0.9 -1.6 0.9 0.3 -1.8 -1.3 -1.2 1.8 -0.2z" fill="#f59a23"/><path d="M7.9 10.4 l0.6 1.1 1.3 0.2 -0.9 0.9 0.2 1.3 -1.2 -0.6 -1.2 0.6 0.2 -1.3 -0.9 -0.9 1.3 -0.2z" fill="#f59a23"/><circle cx="3.4" cy="14.8" r="0.8" fill="#f59a23"/><ellipse cx="5.6" cy="19.6" rx="1.7" ry="2.5" fill="#0b0b5e" transform="rotate(-20 5.6 19.6)"/><path d="M6.2 17 L13.6 9.4 L20.6 23.6 L9.2 23.2 Z" fill="#ff0a60"/><ellipse cx="18.7" cy="15.3" rx="4.5" ry="9.9" transform="rotate(-24 18.7 15.3)" fill="#fff" stroke="#ff0a60" stroke-width="0.9"/><circle cx="16.6" cy="16.2" r="1.6" fill="#ff0a60"/><rect x="8.3" y="22.6" width="3.4" height="3.6" rx="0.8" fill="#f7a6b5"/><path d="M7 27 L9.4 28.4" stroke="#0b0b5e" stroke-width="1.1" stroke-linecap="round"/><path d="M23.3 9.6 L25.8 7.2 M24.9 12.2 L29.3 10.7 M25.3 15.2 L28.8 16.5" stroke="#ff0a60" stroke-width="0.9" stroke-linecap="round" fill="none"/><rect x="27.3" y="19.2" width="2.5" height="2.5" fill="none" stroke="#ff0a60" stroke-width="0.8"/><circle cx="16.2" cy="25.4" r="1.9" fill="none" stroke="#ff0a60" stroke-width="1"/><circle cx="24.2" cy="26" r="2.1" fill="none" stroke="#ff0a60" stroke-width="1"/></svg>
<div class="t" style="left:863.8px;top:304px;font-size:13px;line-height:18px;color:#33384a;letter-spacing:-0.13px;">Marketing</div>
<div class="b" style="left:1221px;top:302px;width:22px;height:19px;background:#d92b35;border-radius:4.5px;"></div>
<div class="t" style="left:1228.94px;top:304px;font-size:11px;line-height:14px;color:#fff;font-weight:700;">5</div>
<div class="b" style="left:1256px;top:302px;width:187px;height:19px;background:#d6ddef;"></div>
<div class="b" style="left:1256px;top:302px;width:15px;height:19px;background:#3a9f34;overflow:hidden;"><span style="color:#fff;font-size:13px;line-height:19px;display:block;text-align:left;white-space:nowrap;">0%</span></div>
<div class="b" style="left:1449px;top:299px;width:48px;height:22px;background:#f8f8f9;"></div>
<div class="t" style="left:1460.8px;top:303px;font-size:11.5px;line-height:14px;color:#1c2d66;font-weight:700;letter-spacing:0.67px;">0.00</div>
<div class="b" style="left:264px;top:375px;width:1304px;height:90.3px;background:#fff;border-radius:3px;box-shadow:0 1px 3px rgba(20,30,60,.07);"></div>
<svg class="i" style="left:284px;top:402px;" width="6" height="11" viewBox="0 0 6 11"><path d="M0 0.3 L5.6 5.4 L0 10.5 Z" fill="#10152e"/></svg>
<svg class="i" style="left:292px;top:398px;" width="20" height="20" viewBox="0 0 20 20"><circle fill="none" stroke="#1a1f33" stroke-width="1.3" stroke-linecap="round" stroke-linejoin="round" cx="10" cy="10" r="6.3"/><circle fill="none" stroke="#1a1f33" stroke-width="1.3" stroke-linecap="round" stroke-linejoin="round" cx="10" cy="10" r="1.9"/><path fill="none" stroke="#1a1f33" stroke-width="1.3" stroke-linecap="round" stroke-linejoin="round" d="M15.30 10.00 L18.30 10.00 M4.70 10.00 L1.70 10.00 M10.00 15.30 L10.00 18.30 M10.00 4.70 L10.00 1.70 "/></svg>
<div class="t" style="left:319px;top:398px;font-size:15px;line-height:22px;color:#33384a;letter-spacing:-0.15px;">Develop Comprehensive App Tutorial Guides</div>
<svg class="i" style="left:660px;top:399px;" width="16" height="17" viewBox="0 0 16 17"><g fill="none" stroke="#6a6e74" stroke-width="1"><path d="M0 8.5 H3.4 M6.6 8.5 H9.4 M12.6 8.5 H16"/><rect x="3.5" y="4.5" width="3" height="8" rx="1.5"/><rect x="9.5" y="0.5" width="3" height="15" rx="1.5"/></g></svg>
<div class="t" style="left:745.1px;top:393px;font-size:13px;line-height:18px;color:#2e3342;letter-spacing:0.2px;">Q3-2023</div>
<div class="t" style="left:735.7px;top:411px;font-size:10.5px;line-height:14px;color:#9aa1b6;letter-spacing:0.01px;">Jul 01 - Sep 30</div>
<div class="b" style="left:721px;top:426px;width:100px;height:1px;background:#f3f4f8;"></div>
<svg class="i" style="left:833px;top:397.8px;" width="24" height="24" viewBox="0 0 32 32"><circle cx="16" cy="16" r="15.6" fill="#f5f5f7" stroke="#dfe2e9" stroke-width="0.8"/><path d="M7.2 4.6 l0.8 1.6 1.8 0.2 -1.3 1.2 0.4 1.8 -1.7 -0.9 -1.6 0.9 0.3 -1.8 -1.3 -1.2 1.8 -0.2z" fill="#f59a23"/><path d="M7.9 10.4 l0.6 1.1 1.3 0.2 -0.9 0.9 0.2 1.3 -1.2 -0.6 -1.2 0.6 0.2 -1.3 -0.9 -0.9 1.3 -0.2z" fill="#f59a23"/><circle cx="3.4" cy="14.8" r="0.8" fill="#f59a23"/><ellipse cx="5.6" cy="19.6" rx="1.7" ry="2.5" fill="#0b0b5e" transform="rotate(-20 5.6 19.6)"/><path d="M6.2 17 L13.6 9.4 L20.6 23.6 L9.2 23.2 Z" fill="#ff0a60"/><ellipse cx="18.7" cy="15.3" rx="4.5" ry="9.9" transform="rotate(-24 18.7 15.3)" fill="#fff" stroke="#ff0a60" stroke-width="0.9"/><circle cx="16.6" cy="16.2" r="1.6" fill="#ff0a60"/><rect x="8.3" y="22.6" width="3.4" height="3.6" rx="0.8" fill="#f7a6b5"/><path d="M7 27 L9.4 28.4" stroke="#0b0b5e" stroke-width="1.1" stroke-linecap="round"/><path d="M23.3 9.6 L25.8 7.2 M24.9 12.2 L29.3 10.7 M25.3 15.2 L28.8 16.5" stroke="#ff0a60" stroke-width="0.9" stroke-linecap="round" fill="none"/><rect x="27.3" y="19.2" width="2.5" height="2.5" fill="none" stroke="#ff0a60" stroke-width="0.8"/><circle cx="16.2" cy="25.4" r="1.9" fill="none" stroke="#ff0a60" stroke-width="1"/><circle cx="24.2" cy="26" r="2.1" fill="none" stroke="#ff0a60" stroke-width="1"/></svg>
<div class="t" style="left:863.8px;top:401px;font-size:13px;line-height:18px;color:#33384a;letter-spacing:-0.13px;">Marketing</div>
<div class="b" style="left:1221px;top:399px;width:22px;height:19px;background:#d92b35;border-radius:4.5px;"></div>
<div class="t" style="left:1228.94px;top:401px;font-size:11px;line-height:14px;color:#fff;font-weight:700;">5</div>
<div class="b" style="left:1256px;top:399px;width:187px;height:19px;background:#d6ddef;"></div>
<div class="b" style="left:1256px;top:399px;width:39.3px;height:19px;background:#e07b1c;overflow:hidden;"><span style="color:#fff;font-size:13px;line-height:19px;display:block;text-align:center;white-space:nowrap;">21%</span></div>
<div class="b" style="left:1449px;top:396px;width:48px;height:22px;background:#f8f8f9;"></div>
<div class="t" style="left:1460.8px;top:400px;font-size:11.5px;line-height:14px;color:#1c2d66;font-weight:700;letter-spacing:0.67px;">0.20</div>
<div class="b" style="left:264px;top:472px;width:1304px;height:91.6px;background:#fff;border-radius:3px;box-shadow:0 1px 3px rgba(20,30,60,.07);"></div>
<svg class="i" style="left:284px;top:499px;" width="6" height="11" viewBox="0 0 6 11"><path d="M0 0.3 L5.6 5.4 L0 10.5 Z" fill="#10152e"/></svg>
<svg class="i" style="left:292px;top:495px;" width="20" height="20" viewBox="0 0 20 20"><circle fill="none" stroke="#1a1f33" stroke-width="1.3" stroke-linecap="round" stroke-linejoin="round" cx="10" cy="10" r="6.3"/><circle fill="none" stroke="#1a1f33" stroke-width="1.3" stroke-linecap="round" stroke-linejoin="round" cx="10" cy="10" r="1.9"/><path fill="none" stroke="#1a1f33" stroke-width="1.3" stroke-linecap="round" stroke-linejoin="round" d="M15.30 10.00 L18.30 10.00 M4.70 10.00 L1.70 10.00 M10.00 15.30 L10.00 18.30 M10.00 4.70 L10.00 1.70 "/></svg>
<div class="t" style="left:319px;top:495px;font-size:15px;line-height:22px;color:#33384a;letter-spacing:-0.11px;">Develop a Compelling Messaging Framework</div>
<svg class="i" style="left:660px;top:496px;" width="16" height="17" viewBox="0 0 16 17"><g fill="none" stroke="#6a6e74" stroke-width="1"><path d="M0 8.5 H3.4 M6.6 8.5 H9.4 M12.6 8.5 H16"/><rect x="3.5" y="4.5" width="3" height="8" rx="1.5"/><rect x="9.5" y="0.5" width="3" height="15" rx="1.5"/></g></svg>
<div class="t" style="left:745.1px;top:490px;font-size:13px;line-height:18px;color:#2e3342;letter-spacing:0.2px;">Q3-2023</div>
<div class="t" style="left:735.7px;top:508px;font-size:10.5px;line-height:14px;color:#9aa1b6;letter-spacing:0.01px;">Jul 01 - Sep 30</div>
<div class="b" style="left:721px;top:523px;width:100px;height:1px;background:#f3f4f8;"></div>
<div class="b" style="left:833px;top:494.6px;width:24px;height:24px;border-radius:50%;background:#236f92;color:#fff;font-weight:700;font-size:11.5px;line-height:24.6px;text-align:center;">AA</div>
<div class="t" style="left:863.8px;top:498px;font-size:13px;line-height:18px;color:#33384a;letter-spacing:-0.36px;">Amy Adams</div>
<div class="b" style="left:1221px;top:496px;width:22px;height:19px;background:#d92b35;border-radius:4.5px;"></div>
<div class="t" style="left:1228.94px;top:498px;font-size:11px;line-height:14px;color:#fff;font-weight:700;">5</div>
<div class="b" style="left:1256px;top:496px;width:187px;height:19px;background:#d6ddef;"></div>
<div class="b" style="left:1256px;top:496px;width:44.9px;height:19px;background:#3a9f34;overflow:hidden;"><span style="color:#fff;font-size:13px;line-height:19px;display:block;text-align:center;white-space:nowrap;">24%</span></div>
<div class="b" style="left:1449px;top:493px;width:48px;height:22px;background:#f8f8f9;"></div>
<div class="t" style="left:1460.8px;top:497px;font-size:11.5px;line-height:14px;color:#1c2d66;font-weight:700;letter-spacing:0.67px;">0.23</div>
<div class="b" style="left:264px;top:570px;width:1304px;height:90.5px;background:#fff;border-radius:3px;box-shadow:0 1px 3px rgba(20,30,60,.07);"></div>
<svg class="i" style="left:284px;top:597px;" width="6" height="11" viewBox="0 0 6 11"><path d="M0 0.3 L5.6 5.4 L0 10.5 Z" fill="#10152e"/></svg>
<svg class="i" style="left:292px;top:593px;" width="20" height="20" viewBox="0 0 20 20"><circle fill="none" stroke="#1a1f33" stroke-width="1.3" stroke-linecap="round" stroke-linejoin="round" cx="10" cy="10" r="6.3"/><circle fill="none" stroke="#1a1f33" stroke-width="1.3" stroke-linecap="round" stroke-linejoin="round" cx="10" cy="10" r="1.9"/><path fill="none" stroke="#1a1f33" stroke-width="1.3" stroke-linecap="round" stroke-linejoin="round" d="M15.30 10.00 L18.30 10.00 M4.70 10.00 L1.70 10.00 M10.00 15.30 L10.00 18.30 M10.00 4.70 L10.00 1.70 "/></svg>
<div class="t" style="left:323px;top:593px;font-size:15px;line-height:22px;color:#33384a;letter-spacing:0.03px;">Boost customer acquisition on the website</div>
<svg class="i" style="left:640px;top:595px;" width="13" height="15" viewBox="0 0 13 15"><g fill="none" stroke="#a2a5aa" stroke-width="1"><path d="M6.2 0.5 H2.5 Q0.5 0.5 0.5 2.5 V11.5 Q0.5 13.5 2.5 13.5 H9.5 Q11.5 13.5 11.5 11.5 V5.6"/><path d="M3.4 4.5 H6.2 M3.4 7.5 H9"/><path d="M3.4 10.2 H9" stroke-width="1.7"/></g></svg>
<div class="t" style="left:648.6px;top:589px;font-size:9px;line-height:10px;color:#2b2f3a;">1</div>
<svg class="i" style="left:660px;top:594px;" width="16" height="17" viewBox="0 0 16 17"><g fill="none" stroke="#6a6e74" stroke-width="1"><path d="M0 8.5 H3.4 M6.6 8.5 H9.4 M12.6 8.5 H16"/><rect x="3.5" y="4.5" width="3" height="8" rx="1.5"/><rect x="9.5" y="0.5" width="3" height="15" rx="1.5"/></g></svg>
<div class="t" style="left:745.1px;top:588px;font-size:13px;line-height:18px;color:#2e3342;letter-spacing:0.2px;">Q3-2023</div>
<div class="t" style="left:735.7px;top:606px;font-size:10.5px;line-height:14px;color:#9aa1b6;letter-spacing:0.01px;">Jul 01 - Sep 30</div>
<div class="b" style="left:721px;top:621px;width:100px;height:1px;background:#f3f4f8;"></div>
<svg class="i" style="left:833px;top:591.8px;" width="24" height="24" viewBox="0 0 32 32"><circle cx="16" cy="16" r="15.6" fill="#f5f5f7" stroke="#dfe2e9" stroke-width="0.8"/><path d="M7.2 4.6 l0.8 1.6 1.8 0.2 -1.3 1.2 0.4 1.8 -1.7 -0.9 -1.6 0.9 0.3 -1.8 -1.3 -1.2 1.8 -0.2z" fill="#f59a23"/><path d="M7.9 10.4 l0.6 1.1 1.3 0.2 -0.9 0.9 0.2 1.3 -1.2 -0.6 -1.2 0.6 0.2 -1.3 -0.9 -0.9 1.3 -0.2z" fill="#f59a23"/><circle cx="3.4" cy="14.8" r="0.8" fill="#f59a23"/><ellipse cx="5.6" cy="19.6" rx="1.7" ry="2.5" fill="#0b0b5e" transform="rotate(-20 5.6 19.6)"/><path d="M6.2 17 L13.6 9.4 L20.6 23.6 L9.2 23.2 Z" fill="#ff0a60"/><ellipse cx="18.7" cy="15.3" rx="4.5" ry="9.9" transform="rotate(-24 18.7 15.3)" fill="#fff" stroke="#ff0a60" stroke-width="0.9"/><circle cx="16.6" cy="16.2" r="1.6" fill="#ff0a60"/><rect x="8.3" y="22.6" width="3.4" height="3.6" rx="0.8" fill="#f7a6b5"/><path d="M7 27 L9.4 28.4" stroke="#0b0b5e" stroke-width="1.1" stroke-linecap="round"/><path d="M23.3 9.6 L25.8 7.2 M24.9 12.2 L29.3 10.7 M25.3 15.2 L28.8 16.5" stroke="#ff0a60" stroke-width="0.9" stroke-linecap="round" fill="none"/><rect x="27.3" y="19.2" width="2.5" height="2.5" fill="none" stroke="#ff0a60" stroke-width="0.8"/><circle cx="16.2" cy="25.4" r="1.9" fill="none" stroke="#ff0a60" stroke-width="1"/><circle cx="24.2" cy="26" r="2.1" fill="none" stroke="#ff0a60" stroke-width="1"/></svg>
<div class="t" style="left:863.8px;top:595px;font-size:13px;line-height:18px;color:#33384a;letter-spacing:-0.13px;">Marketing</div>
<div class="b" style="left:1221px;top:594px;width:22px;height:19px;background:#d92b35;border-radius:4.5px;"></div>
<div class="t" style="left:1228.94px;top:596px;font-size:11px;line-height:14px;color:#fff;font-weight:700;">5</div>
<div class="b" style="left:1256px;top:594px;width:187px;height:19px;background:#d6ddef;"></div>
<div class="b" style="left:1256px;top:594px;width:16.8px;height:19px;background:#3a9f34;overflow:hidden;"><span style="color:#fff;font-size:13px;line-height:19px;display:block;text-align:left;white-space:nowrap;">9%</span></div>
<div class="b" style="left:1449px;top:591px;width:48px;height:22px;background:#f8f8f9;"></div>
<div class="t" style="left:1460.8px;top:595px;font-size:11.5px;line-height:14px;color:#1c2d66;font-weight:700;letter-spacing:0.67px;">0.09</div>
<div class="b" style="left:264px;top:667.3px;width:1304px;height:115.7px;background:#fff;border-radius:3px;box-shadow:0 1px 3px rgba(20,30,60,.07);"></div>
<svg class="i" style="left:284px;top:694.3px;" width="6" height="11" viewBox="0 0 6 11"><path d="M0 0.3 L5.6 5.4 L0 10.5 Z" fill="#10152e"/></svg>
<svg class="i" style="left:292px;top:690.3px;" width="20" height="20" viewBox="0 0 20 20"><circle fill="none" stroke="#1a1f33" stroke-width="1.3" stroke-linecap="round" stroke-linejoin="round" cx="10" cy="10" r="6.3"/><circle fill="none" stroke="#1a1f33" stroke-width="1.3" stroke-linecap="round" stroke-linejoin="round" cx="10" cy="10" r="1.9"/><path fill="none" stroke="#1a1f33" stroke-width="1.3" stroke-linecap="round" stroke-linejoin="round" d="M15.30 10.00 L18.30 10.00 M4.70 10.00 L1.70 10.00 M10.00 15.30 L10.00 18.30 M10.00 4.70 L10.00 1.70 "/></svg>
<div class="t" style="left:323px;top:690.3px;font-size:15px;line-height:22px;color:#33384a;letter-spacing:-0.12px;">Increase Brand Awareness and Engagement in</div>
<div class="t" style="left:315.5px;top:716.3px;font-size:15px;line-height:22px;color:#33384a;letter-spacing:0.03px;">the Target Market.</div>
<svg class="i" style="left:660px;top:691px;" width="16" height="17" viewBox="0 0 16 17"><g fill="none" stroke="#6a6e74" stroke-width="1"><path d="M0 8.5 H3.4 M6.6 8.5 H9.4 M12.6 8.5 H16"/><rect x="3.5" y="4.5" width="3" height="8" rx="1.5"/><rect x="9.5" y="0.5" width="3" height="15" rx="1.5"/></g></svg>
<div class="t" style="left:745.1px;top:685.3px;font-size:13px;line-height:18px;color:#2e3342;letter-spacing:0.2px;">Q3-2023</div>
<div class="t" style="left:735.7px;top:703.3px;font-size:10.5px;line-height:14px;color:#9aa1b6;letter-spacing:0.01px;">Jul 01 - Sep 30</div>
<div class="b" style="left:721px;top:718.3px;width:100px;height:1px;background:#f3f4f8;"></div>
<svg class="i" style="left:833px;top:689.1px;" width="24" height="24" viewBox="0 0 32 32"><circle cx="16" cy="16" r="15.6" fill="#f5f5f7" stroke="#dfe2e9" stroke-width="0.8"/><path d="M7.2 4.6 l0.8 1.6 1.8 0.2 -1.3 1.2 0.4 1.8 -1.7 -0.9 -1.6 0.9 0.3 -1.8 -1.3 -1.2 1.8 -0.2z" fill="#f59a23"/><path d="M7.9 10.4 l0.6 1.1 1.3 0.2 -0.9 0.9 0.2 1.3 -1.2 -0.6 -1.2 0.6 0.2 -1.3 -0.9 -0.9 1.3 -0.2z" fill="#f59a23"/><circle cx="3.4" cy="14.8" r="0.8" fill="#f59a23"/><ellipse cx="5.6" cy="19.6" rx="1.7" ry="2.5" fill="#0b0b5e" transform="rotate(-20 5.6 19.6)"/><path d="M6.2 17 L13.6 9.4 L20.6 23.6 L9.2 23.2 Z" fill="#ff0a60"/><ellipse cx="18.7" cy="15.3" rx="4.5" ry="9.9" transform="rotate(-24 18.7 15.3)" fill="#fff" stroke="#ff0a60" stroke-width="0.9"/><circle cx="16.6" cy="16.2" r="1.6" fill="#ff0a60"/><rect x="8.3" y="22.6" width="3.4" height="3.6" rx="0.8" fill="#f7a6b5"/><path d="M7 27 L9.4 28.4" stroke="#0b0b5e" stroke-width="1.1" stroke-linecap="round"/><path d="M23.3 9.6 L25.8 7.2 M24.9 12.2 L29.3 10.7 M25.3 15.2 L28.8 16.5" stroke="#ff0a60" stroke-width="0.9" stroke-linecap="round" fill="none"/><rect x="27.3" y="19.2" width="2.5" height="2.5" fill="none" stroke="#ff0a60" stroke-width="0.8"/><circle cx="16.2" cy="25.4" r="1.9" fill="none" stroke="#ff0a60" stroke-width="1"/><circle cx="24.2" cy="26" r="2.1" fill="none" stroke="#ff0a60" stroke-width="1"/></svg>
<div class="t" style="left:863.8px;top:692.3px;font-size:13px;line-height:18px;color:#33384a;letter-spacing:-0.13px;">Marketing</div>
<div class="b" style="left:1221px;top:691.3px;width:22px;height:19px;background:#d92b35;border-radius:4.5px;"></div>
<div class="t" style="left:1228.94px;top:693.3px;font-size:11px;line-height:14px;color:#fff;font-weight:700;">5</div>
<div class="b" style="left:1256px;top:691.3px;width:187px;height:19px;background:#d6ddef;"></div>
<div class="b" style="left:1256px;top:691.3px;width:39.3px;height:19px;background:#3a9f34;overflow:hidden;"><span style="color:#fff;font-size:13px;line-height:19px;display:block;text-align:center;white-space:nowrap;">21%</span></div>
<div class="b" style="left:1449px;top:688.3px;width:48px;height:22px;background:#f8f8f9;"></div>
<div class="t" style="left:1462px;top:692.3px;font-size:11.5px;line-height:14px;color:#1c2d66;font-weight:700;letter-spacing:-0.52px;">21%</div>
<div class="b" style="left:264px;top:790px;width:1304px;height:66px;background:#fff;border-radius:3px;box-shadow:0 1px 3px rgba(20,30,60,.07);"></div>
<svg class="i" style="left:284px;top:817px;" width="6" height="11" viewBox="0 0 6 11"><path d="M0 0.3 L5.6 5.4 L0 10.5 Z" fill="#10152e"/></svg>
<svg class="i" style="left:292px;top:813px;" width="20" height="20" viewBox="0 0 20 20"><circle fill="none" stroke="#1a1f33" stroke-width="1.3" stroke-linecap="round" stroke-linejoin="round" cx="10" cy="10" r="6.3"/><circle fill="none" stroke="#1a1f33" stroke-width="1.3" stroke-linecap="round" stroke-linejoin="round" cx="10" cy="10" r="1.9"/><path fill="none" stroke="#1a1f33" stroke-width="1.3" stroke-linecap="round" stroke-linejoin="round" d="M15.30 10.00 L18.30 10.00 M4.70 10.00 L1.70 10.00 M10.00 15.30 L10.00 18.30 M10.00 4.70 L10.00 1.70 "/></svg>
<div class="t" style="left:319px;top:813px;font-size:15px;line-height:22px;color:#33384a;letter-spacing:-0.09px;">Improve Market Share</div>
<svg class="i" style="left:660px;top:814px;" width="16" height="17" viewBox="0 0 16 17"><g fill="none" stroke="#6a6e74" stroke-width="1"><path d="M0 8.5 H3.4 M6.6 8.5 H9.4 M12.6 8.5 H16"/><rect x="3.5" y="4.5" width="3" height="8" rx="1.5"/><rect x="9.5" y="0.5" width="3" height="15" rx="1.5"/></g></svg>
<div class="t" style="left:745.1px;top:808px;font-size:13px;line-height:18px;color:#2e3342;letter-spacing:0.2px;">Q3-2023</div>
<div class="t" style="left:735.7px;top:826px;font-size:10.5px;line-height:14px;color:#9aa1b6;letter-spacing:0.01px;">Jul 01 - Sep 30</div>
<div class="b" style="left:721px;top:841px;width:100px;height:1px;background:#f3f4f8;"></div>
<div class="b" style="left:833px;top:812.6px;width:24px;height:24px;border-radius:50%;background:#236f92;color:#fff;font-weight:700;font-size:11.5px;line-height:24.6px;text-align:center;">AA</div>
<div class="t" style="left:863.8px;top:816px;font-size:13px;line-height:18px;color:#33384a;letter-spacing:-0.36px;">Amy Adams</div>
<svg class="i" style="left:1045px;top:814px;" width="19" height="18" viewBox="0 0 19 18"><g fill="none" stroke="#2c4170" stroke-width="1" stroke-linecap="round" stroke-linejoin="round"><path d="M9.5 0.6 V15.4 M3.6 3.5 H15.2"/><path d="M5.6 15.7 H13.4" stroke-width="1.3"/><path d="M3.5 3.8 L1.4 9.5 M3.5 3.8 L5.6 9.5 M15.1 3.8 L13 9.5 M15.1 3.8 L17.2 9.5" stroke-width="1.05"/></g><path d="M0.9 9.5 H6.1 Q5.9 12.5 3.5 12.5 Q1.1 12.5 0.9 9.5Z M12.5 9.5 H17.7 Q17.5 12.5 15.1 12.5 Q12.7 12.5 12.5 9.5Z" fill="#1b6fd0" stroke="#2c4170" stroke-width="0.9" stroke-linejoin="round"/><circle cx="9.5" cy="3.5" r="1.25" fill="#1f5fb8"/></svg>
<div class="b" style="left:1046px;top:839px;width:20px;height:1px;background:#f4f5f8;"></div>
<div class="b" style="left:1221px;top:814px;width:22px;height:19px;background:#fbd27a;border-radius:4.5px;"></div>
<div class="t" style="left:1228.94px;top:816px;font-size:11px;line-height:14px;color:#2b2b2b;font-weight:700;">3</div>
<div class="b" style="left:1256px;top:814px;width:187px;height:19px;background:#d6ddef;"></div>
<div class="b" style="left:1256px;top:814px;width:112.2px;height:19px;background:#3a9f34;overflow:hidden;"><span style="color:#fff;font-size:13px;line-height:19px;display:block;text-align:center;white-space:nowrap;">60%</span></div>
<div class="b" style="left:1449px;top:811px;width:48px;height:22px;background:#f8f8f9;"></div>
<div class="t" style="left:1462px;top:815px;font-size:11.5px;line-height:14px;color:#1c2d66;font-weight:700;letter-spacing:-0.52px;">60%</div>
<!-- top hairline -->
<div class="b" style="left:0px;top:0px;width:1597px;height:1px;background:#fff;"></div>
<div class="b" style="left:0px;top:1px;width:1597px;height:1px;background:#dde0e7;"></div>
<!-- scrollbar -->
<div class="b" style="left:1592px;top:2px;width:5px;height:847px;background:#e3e3e3;border-radius:4px 0 0 4px;"></div>
<div class="b" style="left:1592px;top:2px;width:5px;height:830px;background:#a6a6a6;border-radius:4px 0 0 4px;"></div>
<div class="b" style="left:240px;top:849px;width:1357px;height:1px;background:#f1f3f8;"></div>
</body></html>
